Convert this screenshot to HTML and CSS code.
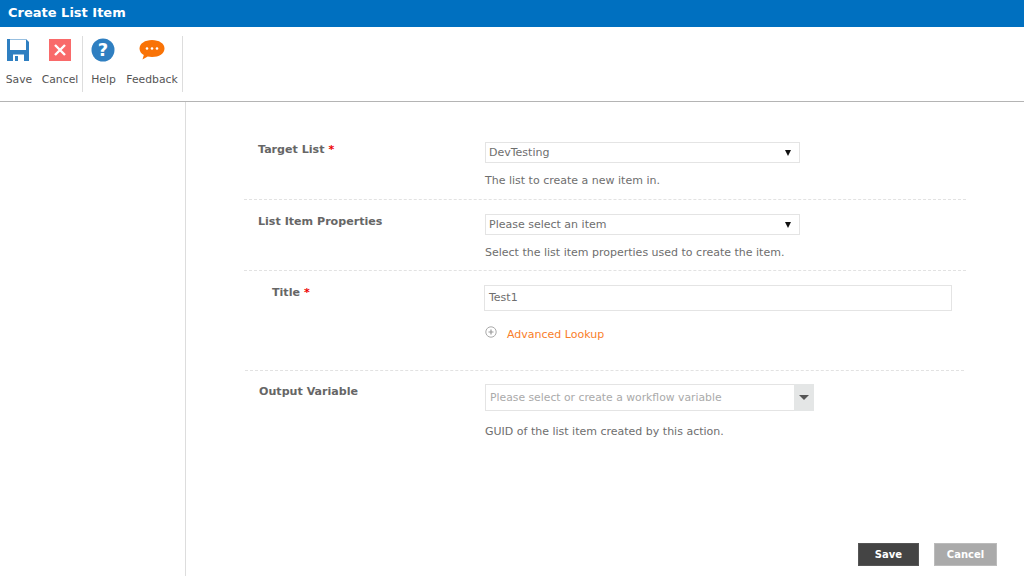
FILE: index.html
```html
<!DOCTYPE html>
<html lang="en">
<head>
<meta charset="utf-8">
<title>Create List Item</title>
<link rel="stylesheet" href="styles.css">
</head>
<body>
<header class="titlebar">Create List Item</header>
<div class="toolbar">
  <div class="tool-group group-a">
    <div class="tool tool-save">
      <svg class="icon" width="24" height="24" viewBox="0 0 24 24"><path fill="#2f7fc1" d="M1 1h19l3 3v19H1z"/><rect x="4" y="1.500" width="16" height="10.500" fill="#fff"/><rect x="7" y="16.500" width="11" height="6.500" fill="#fff"/><rect x="9" y="18" width="3" height="5" fill="#2f7fc1"/></svg>
      <span>Save</span>
    </div>
    <div class="tool tool-cancel">
      <svg class="icon" width="24" height="24" viewBox="0 0 24 24"><rect x="1" y="1" width="22" height="22" fill="#f96a6a"/><path d="M7 7l10 10M17 7L7 17" stroke="#fff" stroke-width="2.400" fill="none"/></svg>
      <span>Cancel</span>
    </div>
  </div>
  <div class="tool-group group-b">
    <div class="tool tool-help">
      <svg class="icon" width="24" height="24" viewBox="0 0 24 24"><circle cx="12" cy="12" r="11.500" fill="#2f7fc1"/><text x="12" y="18" class="qmark" text-anchor="middle">?</text></svg>
      <span>Help</span>
    </div>
    <div class="tool tool-feedback">
      <svg class="icon" width="26" height="24" viewBox="0 0 26 24"><path fill="#f97306" d="M13 2c7 0 12.500 3.500 12.500 8.500S20 19 13 19c-1.500 0-3-.2-4.300-.5L3.500 21.500l1.300-4.500C2 15.500.5 13 .5 10.500.5 5.500 6 2 13 2z"/><circle cx="8" cy="10.500" r="1.300" fill="#fff"/><circle cx="13" cy="10.500" r="1.300" fill="#fff"/><circle cx="18" cy="10.500" r="1.300" fill="#fff"/></svg>
      <span>Feedback</span>
    </div>
  </div>
</div>
<div class="body">
  <aside class="sidebar"></aside>
  <main class="content">
    <section class="row row-target">
      <div class="label">Target List <em>*</em></div>
      <div class="field">
        <div class="select"><span>DevTesting</span><i class="caret"></i></div>
        <p class="hint">The list to create a new item in.</p>
      </div>
    </section>
    <section class="row row-props">
      <div class="label">List Item Properties</div>
      <div class="field">
        <div class="select"><span>Please select an item</span><i class="caret"></i></div>
        <p class="hint">Select the list item properties used to create the item.</p>
      </div>
    </section>
    <section class="row row-title">
      <div class="label">Title <em>*</em></div>
      <div class="field">
        <div class="textbox">Test1</div>
        <div class="lookup">
          <svg width="12" height="12" viewBox="0 0 12 12"><circle cx="6" cy="6" r="5.200" fill="none" stroke="#aaa"/><path d="M3.500 6h5M6 3.500v5" stroke="#999" stroke-width="1.200"/></svg>
          <a>Advanced Lookup</a>
        </div>
      </div>
    </section>
    <section class="row row-output">
      <div class="label">Output Variable</div>
      <div class="field">
        <div class="combo"><span>Please select or create a workflow variable</span><b><i></i></b></div>
        <p class="hint">GUID of the list item created by this action.</p>
      </div>
    </section>
    <footer class="actions">
      <button class="btn btn-save">Save</button>
      <button class="btn btn-cancel">Cancel</button>
    </footer>
  </main>
</div>
</body>
</html>
```

FILE: styles.css
```css
* { box-sizing: border-box; }
html, body { height: 100%; }
body {
  margin: 0;
  height: 576px;
  overflow: hidden;
  display: flex;
  flex-direction: column;
  font-family: "DejaVu Sans", Verdana, sans-serif;
  font-size: 11px;
  color: #6e6e6e;
  background: #fff;
}
.titlebar {
  height: 27px;
  background: #0070c0;
  color: #fff;
  font-weight: bold;
  font-size: 13px;
  line-height: 26px;
  padding-left: 8px;
}
.toolbar {
  height: 75px;
  display: flex;
  border-bottom: 1px solid #b4b4b4;
  padding-top: 9px;
}
.tool-group {
  display: flex;
  height: 56px;
  border-right: 1px solid #ddd;
}
.group-a { width: 83px; }
.group-b { width: 100px; }
.tool {
  display: flex;
  flex-direction: column;
  align-items: center;
  color: #555;
  font-size: 10.800px;
}
.tool span { margin-top: 11px; line-height: 14px; }
.tool .icon { display: block; margin-top: 2px; }
.tool-save { width: 38px; }
.tool-save .icon { margin-left: -2px; }
.tool-cancel { width: 44px; }
.tool-help { width: 41px; }
.tool-help .icon { margin-left: -2px; }
.tool-feedback { width: 56px; }
.qmark { font: bold 18px "DejaVu Sans", sans-serif; fill: #fff; }
.body { flex: 1; display: flex; min-height: 0; }
.sidebar { width: 186px; border-right: 1px solid #ddd; }
.content {
  flex: 1;
  display: flex;
  flex-direction: column;
  padding: 0 27px 10px 58px;
}
.row {
  display: flex;
  margin-right: 31px;
  border-bottom: 1px dashed #e2e2e2;
}
.label {
  width: 241px;
  font-weight: bold;
  font-size: 11.100px;
  color: #666;
  padding: 1px 0 0 14px;
  line-height: 14px;
}
.label em { color: #e00; font-style: normal; }
.field { flex: 1; }
.row-target { height: 98px; padding-top: 40px; }
.row-props { height: 71px; padding-top: 14px; }
.row-title { height: 100px; padding-top: 14px; margin-left: 1px; margin-right: 33px; }
.row-title .label { padding-left: 27px; width: 239px; }
.row-output { border-bottom: 0; padding-top: 13px; margin-left: 1px; }
.row-output .label { padding-left: 14px; width: 240px; }
.select {
  width: 315px;
  height: 21px;
  border: 1px solid #e4e4e4;
  padding: 0 8px 0 3px;
  display: flex;
  align-items: center;
  justify-content: space-between;
  line-height: 19px;
}
.caret {
  width: 0;
  height: 0;
  border-left: 3.500px solid transparent;
  border-right: 3.500px solid transparent;
  border-top: 6px solid #111;
}
.hint { margin: 10px 0 0; line-height: 16px; }
.textbox {
  width: 468px;
  height: 26px;
  border: 1px solid #e4e4e4;
  padding: 0 4px;
  line-height: 24px;
}
.lookup {
  display: flex;
  align-items: center;
  gap: 10px;
  margin: 15px 0 0 1px;
  height: 16px;
}
.lookup svg { margin-top: -4px; }
.lookup a { color: #f97e2a; }
.combo {
  width: 329px;
  height: 27px;
  border: 1px solid #e4e4e4;
  border-right: 0;
  display: flex;
  justify-content: space-between;
  line-height: 25px;
  padding-left: 4px;
  font-size: 10.800px;
  color: #aaa;
}
.combo b {
  width: 20px;
  margin: -1px 0;
  background: #e4e6e6;
  display: flex;
  align-items: center;
  justify-content: center;
}
.combo i {
  width: 0;
  height: 0;
  border-left: 5px solid transparent;
  border-right: 5px solid transparent;
  border-top: 5px solid #555;
}
.row-output .hint { margin-top: 13px; }
.actions {
  margin-top: auto;
  display: flex;
  justify-content: flex-end;
  gap: 15px;
}
.btn {
  height: 23px;
  border: 1px solid #ccc;
  color: #fff;
  font: bold 10px "DejaVu Sans", sans-serif;
  padding: 0;
}
.btn-save { width: 61px; background: #444; border-color: #555; }
.btn-cancel { width: 63px; background: #aaa; border-color: #bbb; }
```
